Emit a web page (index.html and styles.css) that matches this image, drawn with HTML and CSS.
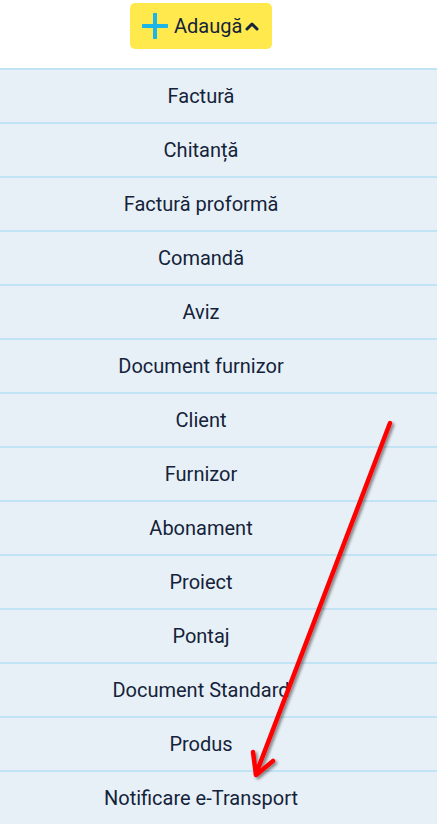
FILE: index.html
```html
<!DOCTYPE html>
<html lang="ro">
<head>
    <meta charset="utf-8" />
    <title>Adaugă</title>
    <link rel="stylesheet" href="styles.css">
</head>
<body>
<div class="page">
    <div class="toolbar">
        <button class="add-btn" type="button">
            <svg class="plus" width="26" height="26" viewBox="0 0 26 26" aria-hidden="true">
                <path d="M13 1v24M1 13h24" stroke="#1bb5ea" stroke-width="4" stroke-linecap="round"/>
            </svg>
            <span class="label">Adaugă</span>
            <svg class="chev" width="14" height="10" viewBox="0 0 14 10" aria-hidden="true">
                <path d="M2 8l5-5 5 5" fill="none" stroke="#14233a" stroke-width="3" stroke-linecap="round" stroke-linejoin="round"/>
            </svg>
        </button>
    </div>
    <ul class="menu">
        <li>Factură</li>
        <li>Chitanță</li>
        <li>Factură proformă</li>
        <li>Comandă</li>
        <li>Aviz</li>
        <li>Document furnizor</li>
        <li>Client</li>
        <li>Furnizor</li>
        <li>Abonament</li>
        <li>Proiect</li>
        <li>Pontaj</li>
        <li>Document Standard</li>
        <li>Produs</li>
        <li>Notificare e-Transport</li>
    </ul>
    <svg class="arrow" width="437" height="833" viewBox="0 0 437 833" aria-hidden="true">
        <defs>
            <filter id="shadow" x="-20%" y="-20%" width="140%" height="140%">
                <feDropShadow dx="2" dy="2" stdDeviation="1.5" flood-color="#000" flood-opacity="0.45"/>
            </filter>
        </defs>
        <g filter="url(#shadow)" stroke="#ff0000" stroke-width="4.5" stroke-linecap="round" stroke-linejoin="round" fill="none">
            <path d="M390 423L256 774"/>
            <path d="M253 752L256 775L273 761"/>
        </g>
    </svg>
</div>
</body>
</html>
```

FILE: styles.css
```css
html, body {
    margin: 0;
    padding: 0;
    background: #fff;
}
body {
    font-family: Roboto, "Liberation Sans", sans-serif;
    color: #14233a;
}
.page {
    position: relative;
    width: 437px;
}
.toolbar {
    height: 68px;
    display: flex;
    justify-content: center;
    align-items: flex-start;
    padding-right: 35px;
}
.add-btn {
    margin-top: 3px;
    height: 46px;
    width: 142px;
    display: flex;
    align-items: center;
    padding: 0 0 0 12px;
    border: none;
    border-radius: 5px;
    background: #ffe94d;
    font: inherit;
    font-size: 20px;
    color: #14233a;
}
.add-btn .label {
    margin-left: 6px;
}
.add-btn .chev {
    margin-left: 3px;
}
.menu {
    list-style: none;
    margin: 0;
    padding: 0;
}
.menu li {
    height: 52px;
    border-top: 2px solid #c2e3f4;
    background: #e8f0f7;
    display: flex;
    align-items: center;
    justify-content: center;
    padding-right: 35px;
    font-size: 20px;
}
.arrow {
    position: absolute;
    left: 0;
    top: 0;
    pointer-events: none;
}
```
